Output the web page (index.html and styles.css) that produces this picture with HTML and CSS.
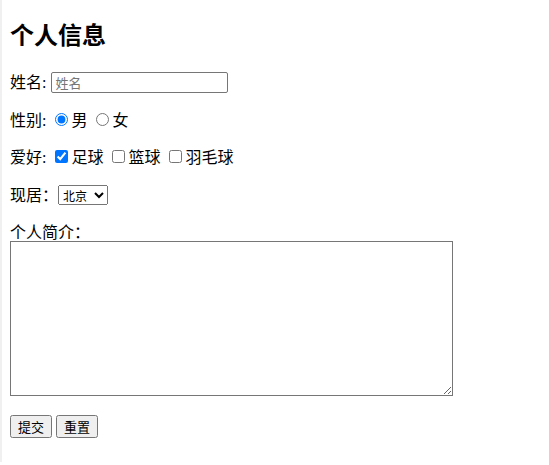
FILE: index.html
```html
<!DOCTYPE html>
<html lang="zh-CN">
<head>
  <meta charset="UTF-8">
  <title>个人信息</title>
  <link rel="stylesheet" href="styles.css">
</head>
<body>
  <form class="info-form">
    <h2>个人信息</h2>
    <p>姓名: <input type="text" class="name-input" placeholder="姓名"></p>
    <p>性别: <input type="radio" name="sex" checked>男 <input type="radio" name="sex">女</p>
    <p>爱好: <input type="checkbox" checked>足球 <input type="checkbox">篮球 <input type="checkbox">羽毛球</p>
    <p>现居：<select class="city">
        <option>北京</option>
        <option>上海</option>
        <option>广州</option>
      </select></p>
    <p>个人简介：<textarea class="intro"></textarea></p>
    <p class="actions"><input type="submit" class="btn" value="提交"> <input type="reset" class="btn" value="重置"></p>
  </form>
</body>
</html>
```

FILE: styles.css
```css
html {
  border-left: 2px solid #f0f0f0;
}
body {
  margin: 0 8px 8px;
  font-family: "Liberation Serif", "Noto Sans CJK SC", serif;
  font-size: 16px;
  line-height: 21.5px;
  color: #000;
}
h2 {
  margin: 20px 0;
  font-size: 24px;
  line-height: 32px;
}
p {
  margin: 16px 0;
}
input, select, textarea {
  font-family: "Noto Sans CJK SC", sans-serif;
  font-size: 13px;
}
input[type="radio"],
input[type="checkbox"] {
  margin-left: 5px;
}
.name-input {
  box-sizing: border-box;
  width: 177px;
  height: 21px;
  margin-left: 1px;
  padding: 1px 3px;
  border: 1px solid #767676;
  border-radius: 2px;
  line-height: 17px;
}
.city {
  box-sizing: border-box;
  width: 50px;
  height: 20px;
  padding: 0;
  font-size: 12px;
}
.intro {
  display: block;
  box-sizing: border-box;
  width: 443px;
  height: 155px;
  margin: -3px 0 0;
  border: 1px solid #767676;
}
.actions {
  margin-top: 19px;
}
.btn {
  box-sizing: border-box;
  height: 23px;
  padding: 0 6px;
  line-height: 19px;
}
```
